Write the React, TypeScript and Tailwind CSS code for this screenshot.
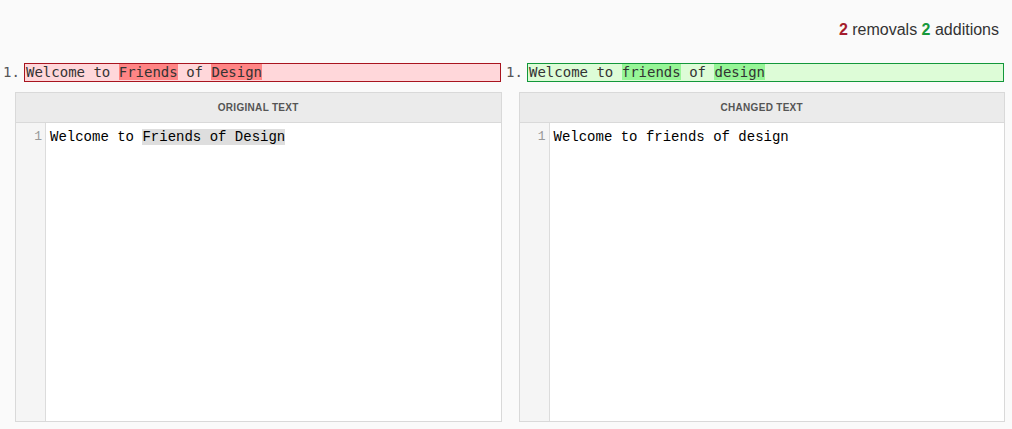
const mono = { fontFamily: '"DejaVu Sans Mono", monospace' };
const code = { fontFamily: '"Liberation Mono", "Courier New", monospace' };

type Seg = { text: string; mark?: boolean };

const left: Seg[] = [
  { text: "Welcome to " },
  { text: "Friends", mark: true },
  { text: " of " },
  { text: "Design", mark: true },
];

const right: Seg[] = [
  { text: "Welcome to " },
  { text: "friends", mark: true },
  { text: " of " },
  { text: "design", mark: true },
];

function DiffLine({ segs, kind }: { segs: Seg[]; kind: "del" | "add" }) {
  const box =
    kind === "del"
      ? "border-[#a8141f] bg-[#ffd7da]"
      : "border-[#12973a] bg-[#ddfcd7]";
  const mark = kind === "del" ? "bg-[#ff8585]" : "bg-[#97f597]";
  return (
    <div className="flex items-center h-[18px]">
      <span
        className="w-[24px] pl-[3px] text-[14px] text-[#555] leading-[18px]"
        style={mono}
      >
        1.
      </span>
      <div
        className={`flex-1 h-[19px] border pl-[1px] text-[14px] leading-[17px] text-[#333] whitespace-pre ${box}`}
        style={mono}
      >
        {segs.map((s, i) => (
          <span key={i} className={s.mark ? mark : ""}>
            {s.text}
          </span>
        ))}
      </div>
    </div>
  );
}

function Panel({ title, children }: { title: string; children: React.ReactNode }) {
  return (
    <div className="flex-1 flex flex-col border border-[#d9d9d9] bg-white">
      <div className="h-[30px] flex items-center justify-center bg-[#ebebeb] border-b border-[#d9d9d9] text-[10px] font-bold tracking-[0.3px] text-[#555]">
        {title}
      </div>
      <div className="flex flex-1">
        <div
          className="w-[30px] bg-[#f5f5f5] border-r border-[#dcdcdc] pt-[6px] pr-[3px] text-right text-[13px] text-[#999] leading-[16px]"
          style={code}
        >
          1
        </div>
        <div
          className="pl-[4px] pt-[6px] text-[14px] leading-[16px] text-black whitespace-pre"
          style={code}
        >
          {children}
        </div>
      </div>
    </div>
  );
}

export default function App() {
  return (
    <div
      className="w-[1012px] h-[429px] bg-[#fafafa] overflow-hidden"
      style={{ fontFamily: '"Liberation Sans", Arial, sans-serif' }}
    >
      <div className="h-[63px] flex justify-end items-start pt-[18px] pr-[13px] text-[16px] text-[#333]">
        <span>
          <b className="text-[#a51d2d]">2</b> removals{" "}
          <b className="text-[#17983a]">2</b> additions
        </span>
      </div>
      <div className="flex">
        <div className="w-[501px]">
          <DiffLine segs={left} kind="del" />
        </div>
        <div className="w-[501px] ml-[2px]">
          <DiffLine segs={right} kind="add" />
        </div>
      </div>
      <div className="flex gap-[17px] pl-[15px] pr-[7px] pt-[11px] h-[341px]">
        <Panel title="ORIGINAL TEXT">
          Welcome to <span className="bg-[#dedede]">Friends of Design</span>
        </Panel>
        <Panel title="CHANGED TEXT">Welcome to friends of design</Panel>
      </div>
    </div>
  );
}
